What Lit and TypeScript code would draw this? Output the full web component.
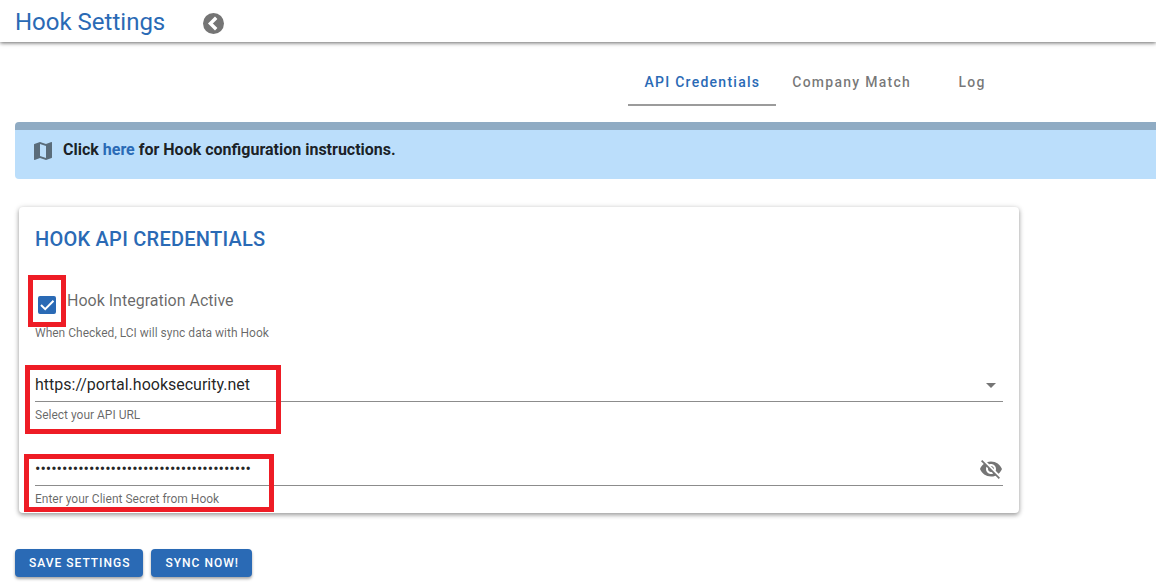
import { LitElement, html, css } from "lit";
import { customElement, state } from "lit/decorators.js";

@customElement("app-root")
export class AppRoot extends LitElement {
  static styles = css`
    :host {
      display: block;
      font-family: Roboto, sans-serif;
      font-size: 16px;
      line-height: 24px;
      color: rgba(0, 0, 0, 0.87);
      background: #fff;
      overflow-x: hidden;
    }
    *, *::before, *::after { box-sizing: border-box; }
    button, input, select { font: inherit; color: inherit; margin: 0; }
    button { cursor: pointer; }
    a { color: #2a6ab5; text-decoration: none; }

    .bar {
      display: flex;
      align-items: center;
      gap: 36px;
      height: 42px;
      padding: 2px 15px 0;
      box-shadow: 0 1px 4px rgba(0, 0, 0, 0.6);
    }
    .title { margin: 0; font-size: 24px; line-height: 32px; font-weight: 400; color: #2a6ab5; }
    .back { display: flex; padding: 3px 0 0; border: 0; background: none; color: #757575; }

    .tabs {
      display: flex;
      justify-content: flex-end;
      margin: 16px 139px 16px 15px;
    }
    .tab {
      min-width: 90px;
      height: 48px;
      padding: 2px 16px 0;
      border: 0;
      border-bottom: 2px solid transparent;
      background: none;
      font-size: 14px;
      font-weight: 500;
      letter-spacing: 0.09em;
      color: rgba(0, 0, 0, 0.54);
    }
    .tab.active { color: #2a6ab5; border-color: #9b9b9b; }

    .notice {
      display: flex;
      gap: 8px;
      margin-left: 15px;
      padding: 8px 16px 16px;
      border-top: 8px solid #8fabc3;
      border-radius: 4px 0 0 4px;
      background: #bbdefb;
      font-weight: 700;
      line-height: 23px;
    }
    .notice svg { flex: none; margin-top: 1px; color: #5a6c7a; }
    .notice p { margin: 0; }

    .card {
      position: relative;
      max-width: 1000px;
      margin: 28px 19px 0;
      padding: 16px 16px 6px;
      border-radius: 4px;
      box-shadow: 0 2px 4px rgba(0, 0, 0, 0.3), 0 1px 6px rgba(0, 0, 0, 0.16);
    }
    .heading {
      margin: 0 0 34px;
      font-size: 20px;
      line-height: 32px;
      font-weight: 500;
      letter-spacing: 0.0125em;
      color: #2a6ab5;
    }

    .check { display: flex; gap: 11px; padding-left: 3px; color: rgba(0, 0, 0, 0.6); }
    .tick {
      appearance: none;
      flex: none;
      width: 18px;
      height: 18px;
      margin-top: 7px;
      border: 2px solid #2a6ab5;
      border-radius: 2px;
    }
    .tick:checked {
      background: #2a6ab5 url("data:image/svg+xml,%3Csvg xmlns='http://www.w3.org/2000/svg' viewBox='0 0 18 18'%3E%3Cpath d='M3 9l4.2 4.2L15.5 4.8' fill='none' stroke='white' stroke-width='2'/%3E%3C/svg%3E") center / 18px 18px;
    }
    .hint { margin: 5px 0 0; font-size: 12px; line-height: 16px; color: rgba(0, 0, 0, 0.6); }
    .check + .hint { margin-top: 11px; }

    .field { margin-top: 26px; }
    .field.secret { margin-top: 27px; }
    .control {
      display: flex;
      align-items: center;
      border-bottom: 1px solid #8c8c8c;
    }
    .value {
      appearance: none;
      flex: 1;
      min-width: 0;
      height: 34px;
      padding: 2px 0 0;
      border: 0;
      outline: 0;
      background: none;
    }
    .control svg { flex: none; margin-top: 2px; color: #757575; }
    .arrow { pointer-events: none; margin-left: -24px; }
    .secret .value { height: 35px; }
    .eye { display: flex; padding: 0; border: 0; background: none; }

    .mark { position: absolute; border: 5px solid #ee1c25; pointer-events: none; }
    .mark-check { left: 9px; top: 68px; width: 38px; height: 52px; }
    .mark-url { left: 6px; top: 158px; width: 256px; height: 69px; }
    .mark-secret { left: 5px; top: 247px; width: 250px; height: 58px; }

    .actions { display: flex; gap: 8px; padding: 36px 15px 11px; }
    .action {
      height: 28px;
      padding: 0 13px 0 14px;
      border: 0;
      border-radius: 4px;
      background: #2a6ab5;
      color: #fff;
      font-size: 12px;
      font-weight: 500;
      letter-spacing: 1px;
      text-transform: uppercase;
      box-shadow: 0 2px 3px rgba(0, 0, 0, 0.35);
    }
  `;

  @state() private tab = "API Credentials";
  @state() private reveal = false;

  render() {
    return html`
      <header class="bar">
        <h1 class="title">Hook Settings</h1>
        <button class="back" aria-label="Back">
          <svg width="25" height="25" viewBox="0 0 25 25">
            <circle cx="12.5" cy="12.5" r="10.5" fill="currentColor" />
            <path d="M15.2 6.7L9.4 12.5l5.8 5.8" fill="none" stroke="#fff" stroke-width="3.4" />
          </svg>
        </button>
      </header>

      <nav class="tabs" role="tablist">
        ${["API Credentials", "Company Match", "Log"].map(
          (name) => html`<button
            role="tab"
            class="tab ${name === this.tab ? "active" : ""}"
            aria-selected=${name === this.tab}
            @click=${() => (this.tab = name)}
          >${name}</button>`
        )}
      </nav>

      <section class="notice">
        <svg width="24" height="24" viewBox="0 0 24 24" fill="currentColor">
          <path d="M20.5 3l-.16.03L15 5.1 9 3 3.36 4.9c-.21.07-.36.25-.36.48V20.5c0 .28.22.5.5.5l.16-.03L9 18.9l6 2.1 5.64-1.9c.21-.07.36-.25.36-.48V3.5c0-.28-.22-.5-.5-.5zM15 19l-6-2.11V5l6 2.11V19z" />
        </svg>
        <p>Click <a href="#">here</a> for Hook configuration instructions.</p>
      </section>

      <section class="card">
        <h2 class="heading">HOOK API CREDENTIALS</h2>

        <div class="check">
          <input class="tick" id="active" type="checkbox" checked aria-describedby="active-hint" />
          <label for="active">Hook Integration Active</label>
        </div>
        <p class="hint" id="active-hint">When Checked, LCI will sync data with Hook</p>

        <div class="field">
          <div class="control">
            <select class="value" id="url">
              <option>https://portal.hooksecurity.net</option>
            </select>
            <svg class="arrow" width="24" height="24" viewBox="0 0 24 24" fill="currentColor"><path d="M7 10l5 5 5-5z" /></svg>
          </div>
          <p class="hint"><label for="url">Select your API URL</label></p>
        </div>

        <div class="field secret">
          <div class="control">
            <input
              class="value"
              id="secret"
              type=${this.reveal ? "text" : "password"}
              value="0000000000000000000000000000000000000000"
            />
            <button class="eye" aria-label="Show secret" @click=${() => (this.reveal = !this.reveal)}>
              <svg width="24" height="24" viewBox="0 0 24 24" fill="currentColor">
                <path d="M12 7c2.76 0 5 2.24 5 5 0 .65-.13 1.26-.36 1.83l2.92 2.92c1.51-1.26 2.7-2.89 3.43-4.75-1.73-4.39-6-7.5-11-7.5-1.4 0-2.74.25-3.98.7l2.16 2.16C10.74 7.13 11.35 7 12 7zM2 4.27l2.28 2.28.46.46C3.08 8.3 1.78 10.02 1 12c1.73 4.39 6 7.5 11 7.5 1.55 0 3.03-.3 4.38-.84l.42.42L19.73 22 21 20.73 3.27 3 2 4.27zM7.53 9.8l1.55 1.55c-.05.21-.08.43-.08.65 0 1.66 1.34 3 3 3 .22 0 .44-.03.65-.08l1.55 1.55c-.67.33-1.41.53-2.2.53-2.76 0-5-2.24-5-5 0-.79.2-1.53.53-2.2zm4.31-.78l3.15 3.15.02-.16c0-1.66-1.34-3-3-3l-.17.01z" />
              </svg>
            </button>
          </div>
          <p class="hint"><label for="secret">Enter your Client Secret from Hook</label></p>
        </div>

        <span class="mark mark-check"></span>
        <span class="mark mark-url"></span>
        <span class="mark mark-secret"></span>
      </section>

      <footer class="actions">
        <button class="action">Save Settings</button>
        <button class="action">Sync Now!</button>
      </footer>
    `;
  }
}
